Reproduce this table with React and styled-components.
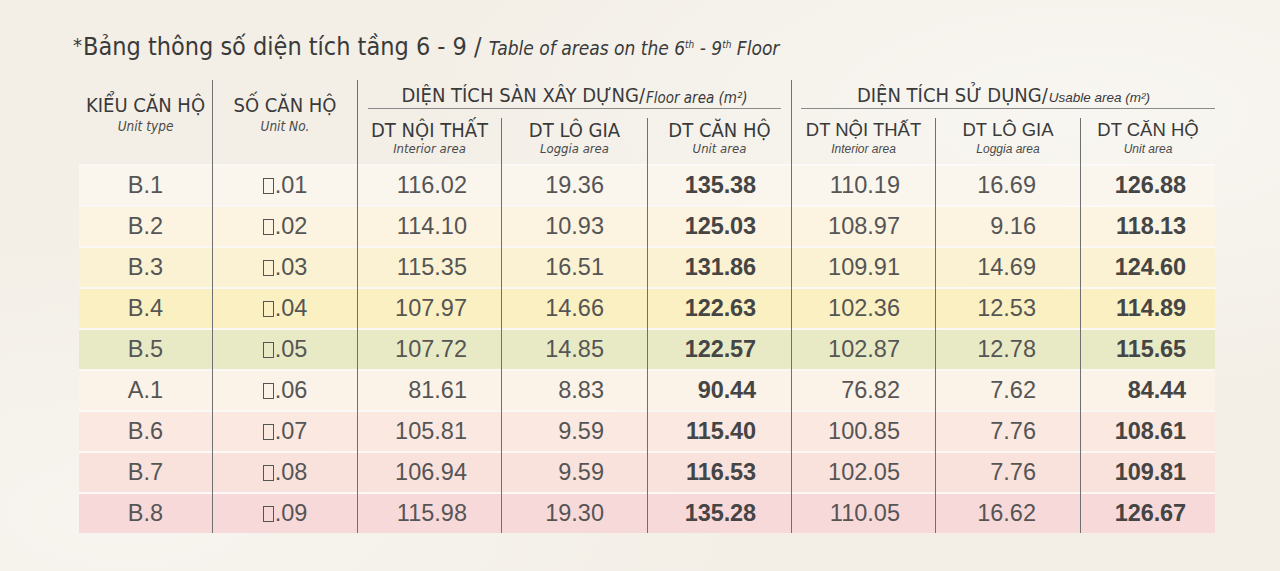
import React from "react";
import styled, { createGlobalStyle } from "styled-components";

const Global = createGlobalStyle`
  html, body { margin: 0; padding: 0; }
  body {
    background: #f3efe7;
    font-family: "Liberation Sans", Arial, sans-serif;
    color: #3b3b3b;
  }
`;

const COLS = "133px 145px 144px 146px 144px 144px 145px 135px";
const LINE = "#707070";
const NARROW = `"Liberation Sans Narrow", "DejaVu Sans Condensed", "Liberation Sans", sans-serif`;

const Page = styled.div`
  width: 1280px;
  height: 571px;
  box-sizing: border-box;
  padding: 30px 0 0 79px;
  background:
    radial-gradient(ellipse at 85% 20%, rgba(255,255,255,0.45), transparent 45%),
    radial-gradient(ellipse at 10% 90%, rgba(255,255,255,0.35), transparent 40%),
    #f3efe7;
  overflow: hidden;
`;

const Title = styled.h1`
  margin: 0 0 0 -6px;
  height: 50px;
  font-family: ${NARROW};
  font-weight: 400;
  font-size: 25px;
  line-height: 30px;
  color: #3a3a3a;
  white-space: nowrap;
`;

const Star = styled.span`
  font-size: 20px;
  vertical-align: 3px;
  margin-right: 1px;
`;

const TitleEn = styled.span`
  font-style: italic;
  font-size: 19px;
`;

const Sup = styled.sup`
  font-size: 10px;
  vertical-align: 7px;
  line-height: 0;
`;

const Table = styled.div`
  width: 1136px;
`;

const Head = styled.div`
  display: grid;
  grid-template-columns: ${COLS};
  grid-template-rows: 38px 46px;
`;

const HeadCell = styled.div`
  grid-row: 1 / 3;
  grid-column: ${(p) => p.$col};
  border-left: ${(p) => (p.$line ? `1px solid ${LINE}` : "none")};
  display: flex;
  flex-direction: column;
  align-items: center;
  padding-top: 14px;
  box-sizing: border-box;
`;

const HeadVi = styled.div`
  font-family: ${NARROW};
  font-size: 20px;
  line-height: 22px;
  color: #3a3a3a;
  white-space: nowrap;
`;

const HeadEn = styled.div`
  font-family: ${NARROW};
  font-style: italic;
  font-size: 13.5px;
  line-height: 16px;
  margin-top: 2px;
  color: #4a4a4a;
`;

const Group = styled.div`
  grid-row: 1;
  grid-column: ${(p) => p.$col};
  border-left: 1px solid ${LINE};
  display: flex;
  flex-direction: column;
  align-items: stretch;
`;

const GroupTitle = styled.div`
  height: 28px;
  display: flex;
  align-items: center;
  justify-content: center;
  padding-top: 1px;
  box-sizing: border-box;
  font-family: ${NARROW};
  font-size: 20px;
  color: #3a3a3a;
  white-space: nowrap;
`;

const GroupEn = styled.span`
  font-family: ${(p) => (p.$wide ? `"Liberation Sans", sans-serif` : NARROW)};
  font-style: italic;
  font-size: ${(p) => (p.$wide ? "13.5px" : "15px")};
  margin-top: 6px;
  margin-left: 1px;
`;

const Rule = styled.div`
  height: 1px;
  background: #8a8a8a;
  margin: 0 ${(p) => p.$right}px 0 ${(p) => p.$left}px;
`;

const SubCell = styled.div`
  grid-row: 2;
  border-left: 1px solid ${LINE};
  display: flex;
  flex-direction: column;
  align-items: center;
  padding-top: 2px;
`;

const SubVi = styled.div`
  font-family: ${(p) => (p.$wide ? `"Liberation Sans", sans-serif` : NARROW)};
  font-size: ${(p) => (p.$wide ? "18.5px" : "20px")};
  line-height: 20px;
  color: #3a3a3a;
  white-space: nowrap;
`;

const SubEn = styled.div`
  font-family: ${(p) => (p.$wide ? `"Liberation Sans", sans-serif` : NARROW)};
  font-style: italic;
  font-size: ${(p) => (p.$wide ? "12px" : "13px")};
  line-height: 14px;
  margin-top: 2px;
  color: #4a4a4a;
  white-space: nowrap;
`;

const Row = styled.div`
  display: grid;
  grid-template-columns: ${COLS};
  height: 41px;
  background: linear-gradient(to bottom, rgba(255, 255, 255, 0.55) 0 2px, ${(p) => p.$bg} 2px);
`;

const Cell = styled.div`
  border-left: ${(p) => (p.$line ? `1px solid ${LINE}` : "none")};
  display: flex;
  align-items: center;
  justify-content: ${(p) => (p.$center ? "center" : "flex-end")};
  padding-right: ${(p) => p.$pr || 0}px;
  padding-top: 2px;
  font-family: "Liberation Sans", Arial, sans-serif;
  font-size: 23.5px;
  font-weight: ${(p) => (p.$bold ? 700 : 400)};
  letter-spacing: ${(p) => (p.$bold ? "-0.1px" : "0")};
  color: ${(p) => (p.$bold ? "#454545" : "#555555")};
  white-space: nowrap;
`;

const Tofu = styled.span`
  display: inline-block;
  box-sizing: border-box;
  width: 11px;
  height: 16px;
  border: 1.5px solid #555;
  margin-right: 1px;
  margin-top: 1px;
`;

const rows = [
  ["B.1", "01", "116.02", "19.36", "135.38", "110.19", "16.69", "126.88", "#faf6ee"],
  ["B.2", "02", "114.10", "10.93", "125.03", "108.97", "9.16", "118.13", "#fcf3e1"],
  ["B.3", "03", "115.35", "16.51", "131.86", "109.91", "14.69", "124.60", "#faf2d3"],
  ["B.4", "04", "107.97", "14.66", "122.63", "102.36", "12.53", "114.89", "#faf0c1"],
  ["B.5", "05", "107.72", "14.85", "122.57", "102.87", "12.78", "115.65", "#e8eac6"],
  ["A.1", "06", "81.61", "8.83", "90.44", "76.82", "7.62", "84.44", "#fbf2e8"],
  ["B.6", "07", "105.81", "9.59", "115.40", "100.85", "7.76", "108.61", "#fae8e1"],
  ["B.7", "08", "106.94", "9.59", "116.53", "102.05", "7.76", "109.81", "#f9e1dc"],
  ["B.8", "09", "115.98", "19.30", "135.28", "110.05", "16.62", "126.67", "#f8d9da"],
];

const pads = [34, 43, 35, 35, 44, 29];

const subs = [
  ["DT NỘI THẤT", "Interior area"],
  ["DT LÔ GIA", "Loggia area"],
  ["DT CĂN HỘ", "Unit area"],
];

export default function App() {
  return (
    <>
      <Global />
      <Page>
        <Title>
          <Star>*</Star>Bảng thông số diện tích tầng 6 - 9 /{" "}
          <TitleEn>
            Table of areas on the 6<Sup>th</Sup> - 9<Sup>th</Sup> Floor
          </TitleEn>
        </Title>
        <Table>
          <Head>
            <HeadCell $col="1">
              <HeadVi>KIỂU CĂN HỘ</HeadVi>
              <HeadEn>Unit type</HeadEn>
            </HeadCell>
            <HeadCell $col="2" $line>
              <HeadVi>SỐ CĂN HỘ</HeadVi>
              <HeadEn>Unit No.</HeadEn>
            </HeadCell>
            <Group $col="3 / 6">
              <GroupTitle>
                DIỆN TÍCH SÀN XÂY DỰNG/<GroupEn>Floor area (m²)</GroupEn>
              </GroupTitle>
              <Rule $left={10} $right={10} />
            </Group>
            <Group $col="6 / 9">
              <GroupTitle>
                DIỆN TÍCH SỬ DỤNG/<GroupEn $wide>Usable area (m²)</GroupEn>
              </GroupTitle>
              <Rule $left={9} $right={0} />
            </Group>
            {[0, 1].map((g) =>
              subs.map(([vi, en], i) => (
                <SubCell key={`${g}-${i}`}>
                  <SubVi $wide={g === 1}>{vi}</SubVi>
                  <SubEn $wide={g === 1}>{en}</SubEn>
                </SubCell>
              ))
            )}
          </Head>
          {rows.map((r) => (
            <Row key={r[0]} $bg={r[8]}>
              <Cell $center>{r[0]}</Cell>
              <Cell $center $line>
                <Tofu aria-label="□" />.{r[1]}
              </Cell>
              {r.slice(2, 8).map((v, i) => (
                <Cell key={i} $line $pr={pads[i]} $bold={i === 2 || i === 5}>
                  {v}
                </Cell>
              ))}
            </Row>
          ))}
        </Table>
      </Page>
    </>
  );
}
